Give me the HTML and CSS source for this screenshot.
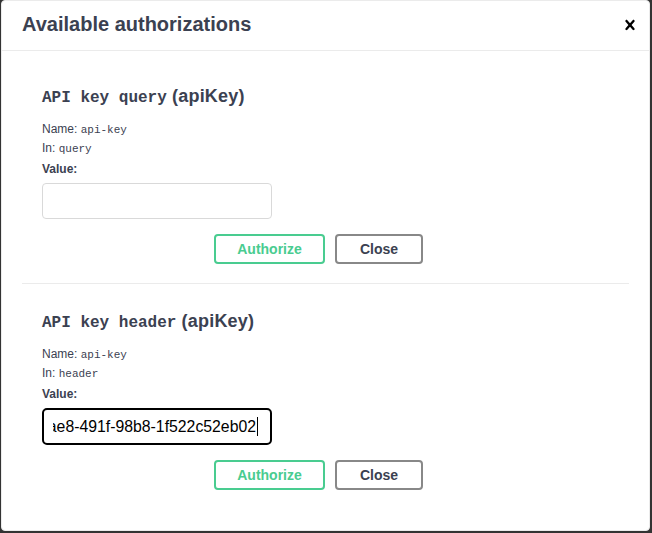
FILE: index.html
```html
<!DOCTYPE html>
<html lang="en">
<head>
<meta charset="utf-8">
<title>Available authorizations</title>
<link rel="stylesheet" href="styles.css">
</head>
<body>
<div class="modal">
  <div class="modal-header">
    <h3 class="modal-title">Available authorizations</h3>
    <button class="close-modal" type="button" aria-label="Close">
      <svg width="20" height="20" viewBox="0 0 20 20"><path d="M14.348 14.849c-.469.469-1.229.469-1.697 0L10 11.819l-2.651 3.029c-.469.469-1.229.469-1.697 0-.469-.469-.469-1.229 0-1.697l2.758-3.15-2.759-3.152c-.469-.469-.469-1.228 0-1.697.469-.469 1.228-.469 1.697 0L10 8.183l2.651-3.031c.469-.469 1.228-.469 1.697 0 .469.469.469 1.229 0 1.697l-2.758 3.152 2.758 3.150c.469.469.469 1.229 0 1.698z"/></svg>
    </button>
  </div>
  <div class="modal-content">
    <div class="auth-container">
      <h4 class="auth-title"><code>API key query</code> (apiKey)</h4>
      <p class="meta">Name: <code>api-key</code></p>
      <p class="meta">In: <code>query</code></p>
      <label class="value-label">Value:</label>
      <div class="field"></div>
      <div class="actions">
        <button class="btn btn-authorize" type="button">Authorize</button>
        <button class="btn btn-close" type="button">Close</button>
      </div>
    </div>
    <div class="auth-container last">
      <h4 class="auth-title"><code>API key header</code> (apiKey)</h4>
      <p class="meta">Name: <code>api-key</code></p>
      <p class="meta">In: <code>header</code></p>
      <label class="value-label">Value:</label>
      <div class="field focused"><div class="field-inner"><span class="field-text">ae8-491f-98b8-1f522c52eb02</span><span class="caret"></span></div></div>
      <div class="actions">
        <button class="btn btn-authorize" type="button">Authorize</button>
        <button class="btn btn-close" type="button">Close</button>
      </div>
    </div>
  </div>
</div>
</body>
</html>
```
FILE: styles.css
```css
html, body {
  margin: 0;
  padding: 0;
  background: #333333;
  height: 100%;
}
body {
  font-family: "Liberation Sans", Arial, sans-serif;
  color: #3b4151;
  padding-left: 1px;
}
.modal {
  width: 647px;
  height: 529px;
  background: #ffffff;
  border: 1px solid #ebebeb;
  border-radius: 4px;
  overflow: hidden;
}
.modal-header {
  display: flex;
  align-items: center;
  justify-content: space-between;
  padding: 12px 0 14px;
  border-bottom: 1px solid #ebebeb;
}
.modal-title {
  margin: 0 20px;
  font-size: 20px;
  line-height: 23px;
  font-weight: bold;
  color: #3b4151;
}
.close-modal {
  margin: 0 9px 0 0;
  padding: 0;
  border: none;
  background: none;
  width: 20px;
  height: 20px;
  display: flex;
}
.close-modal svg {
  fill: #000000;
}
.modal-content {
  padding: 15px 20px 0;
}
.auth-container {
  padding: 20px 20px 19px;
  border-bottom: 1px solid #ebebeb;
  display: flex;
  flex-direction: column;
}
.auth-container.last {
  padding-top: 27px;
  border-bottom: none;
}
.auth-title {
  margin: 0 0 11px;
  font-size: 18px;
  line-height: 21px;
  font-weight: bold;
  color: #3b4151;
  letter-spacing: 0.2px;
}
.auth-title code {
  font-family: "Liberation Mono", "DejaVu Sans Mono", monospace;
  font-size: 16px;
  font-weight: bold;
  letter-spacing: 0;
}
.meta {
  margin: 0;
  font-size: 12px;
  line-height: 19px;
  height: 19px;
  color: #3b4151;
}
.meta code {
  font-family: "Liberation Mono", "DejaVu Sans Mono", monospace;
  font-size: 11px;
  line-height: 12px;
  font-weight: normal;
}
.value-label {
  margin-top: 2px;
  font-size: 12px;
  line-height: 19px;
  font-weight: bold;
  color: #3b4151;
}
.field {
  margin-top: 4px;
  width: 228px;
  height: 34px;
  border: 1px solid #d9d9d9;
  border-radius: 4px;
  background: #ffffff;
  box-sizing: content-box;
}
.field.focused {
  border: 2px solid #000000;
  border-radius: 5px;
  padding: 0 12px 0 9px;
  box-sizing: border-box;
  width: 230px;
  height: 37px;
  display: flex;
  align-items: center;
}
.field-inner {
  flex: 1;
  overflow: hidden;
  display: flex;
  justify-content: flex-end;
  align-items: center;
  white-space: nowrap;
}
.field-text {
  font-size: 15.8px;
  line-height: 20px;
  color: #000000;
  flex: none;
}
.caret {
  flex: none;
  width: 1px;
  height: 19px;
  background: #000000;
  margin-left: 1px;
}
.actions {
  display: flex;
  justify-content: center;
  gap: 10px;
  margin-top: 15px;
  padding-right: 14px;
}
.btn {
  font-family: "Liberation Sans", Arial, sans-serif;
  font-size: 14px;
  font-weight: bold;
  height: 30px;
  padding: 0;
  border-radius: 4px;
  background: #ffffff;
  box-sizing: border-box;
}
.btn-authorize {
  width: 111px;
  border: 2px solid #49cc90;
  color: #49cc90;
}
.btn-close {
  width: 88px;
  border: 2px solid #888888;
  color: #3b4151;
}
```
